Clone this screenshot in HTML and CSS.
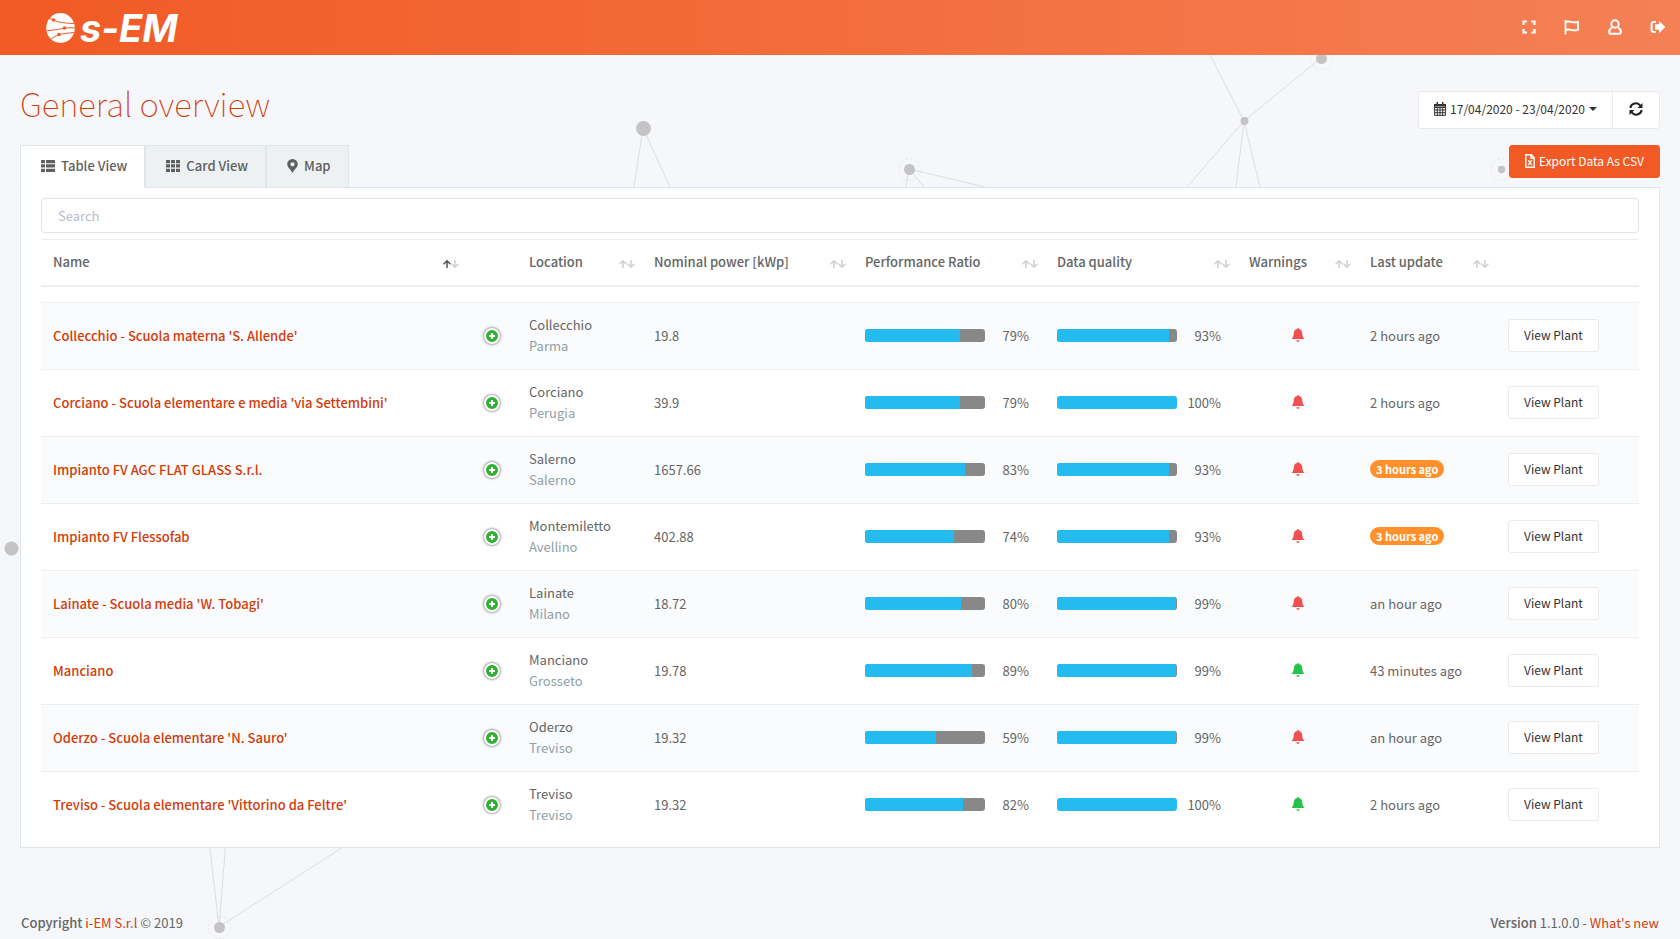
FILE: index.html
```html
<!DOCTYPE html>
<html lang="en">
<head>
    <meta charset="UTF-8">
    <meta name="viewport" content="width=device-width, initial-scale=1.0">
    <title>General overview</title>
    <link rel="stylesheet" href="styles.css">
</head>
<body>
    <!-- icons -->
    <svg class="sprite" aria-hidden="true">
        <symbol id="i-bell" viewBox="0 0 14 14"><path d="M7 0c.6 0 .9.4.9.9 2.200.4 3.200 2 3.300 4 .1 3 .9 4.500 2.400 6.100H.4C1.900 9.400 2.700 7.900 2.800 4.900c.1-2 1.100-3.600 3.300-4C6.100.4 6.400 0 7 0zM5.300 12.200h3.400c-.2.9-.8 1.600-1.700 1.600S5.500 13.100 5.300 12.200z"/></symbol>
        <symbol id="i-plus" viewBox="0 0 8 8"><path d="M3 1h2v2h2v2H5v2H3V5H1V3h2z"/></symbol>
        <symbol id="i-up" viewBox="0 0 8 10"><path d="M4 9V2M.5 5.200L4 1.700L7.500 5.200"/></symbol>
        <symbol id="i-down" viewBox="0 0 8 10"><path d="M4 1v7M.5 4.800L4 8.300L7.500 4.800"/></symbol>
    </svg>

    <svg class="network" viewBox="0 0 1680 939" preserveAspectRatio="xMidYMin slice" aria-hidden="true">
        <g class="lines">
            <path d="M643 128L634 187M643 128L670 187M909 169L906 187M909 169L924 187M909 169L985 187"/>
            <path d="M1321 58L1244 121L1210 55M1244 121L1187 187M1244 121L1236 187M1244 121L1260 187"/>
            <path d="M219 927L209 840M219 927L226 840M219 927L354 840"/>
        </g>
        <g class="nodes">
            <circle cx="643.5" cy="128.500" r="7.500"/>
            <circle cx="909.5" cy="169.500" r="5.500"/>
            <circle cx="1244.500" cy="121" r="4"/>
            <circle cx="1321.500" cy="58.500" r="5.500"/>
            <circle cx="1501.500" cy="169.500" r="3.700"/>
            <circle cx="11.500" cy="548.500" r="7"/>
            <circle cx="219.500" cy="927.500" r="5.500"/>
        </g>
        <g class="rings">
            <circle cx="909.5" cy="169.500" r="11"/>
            <circle cx="1321.500" cy="58.500" r="11"/>
            <circle cx="1501.500" cy="169.500" r="11"/>
            <circle cx="219.500" cy="927.500" r="11"/>
        </g>
    </svg>

    <header class="topbar">
        <a class="brand" href="#">
            <svg width="29" height="30" viewBox="0 0 29 30" aria-hidden="true">
                <ellipse cx="14.500" cy="15" rx="14.300" ry="15" fill="#fff"/>
                <g fill="none" stroke="#f15a24" stroke-width="1">
                    <path d="M2 5q4 1 8 3t18 2.500M0 18q9-1 17-2.500t12-.5M5 26q5-4 11-5t12-1.500"/>
                </g>
                <g fill="#f15a24"><circle cx="7.500" cy="7" r="1.800"/><circle cx="18.500" cy="15" r="1.800"/><circle cx="13" cy="21.500" r="1.800"/></g>
            </svg>
            <span class="brand-name">s-EM</span>
        </a>
        <nav class="topnav">
            <a href="#" aria-label="Full screen"><svg width="14" height="14" viewBox="0 0 14 14"><path d="M1.500 5V1.500H5M9 1.500h3.500V5M12.500 9v3.500H9M5 12.500H1.500V9" fill="none" stroke="#fff" stroke-width="2.200"/></svg></a>
            <a href="#" aria-label="Notifications"><svg width="16" height="16" viewBox="0 0 16 16"><path d="M1.500 1v14.500M1.500 3.200c4-2.400 6 1.600 12.500-.4v8c-6.500 2-8.500-2-12.500.4" fill="none" stroke="#fff" stroke-width="1.800"/></svg></a>
            <a href="#" aria-label="User"><svg width="14" height="16" viewBox="0 0 14 16"><path d="M7 1.300a3.700 3.700 0 1 1 0 7.400a3.700 3.700 0 0 1 0-7.400zM4 9Q1.200 9.600 1.200 13q0 1.700 1.200 1.700h9.200q1.200 0 1.200-1.700Q12.800 9.600 10 9" fill="none" stroke="#fff" stroke-width="2"/></svg></a>
            <a href="#" aria-label="Log out"><svg width="16" height="14" viewBox="0 0 16 14"><path d="M6 2H3.500Q1.600 2 1.600 4v6q0 2 1.900 2H6" fill="none" stroke="#fff" stroke-width="2"/><path d="M9 1l6.500 6L9 13V9.800H5V4.200h4z" fill="#fff"/></svg></a>
        </nav>
    </header>

    <main class="content">
        <div class="heading">
            <h1>General overview</h1>
            <div class="btn-group">
                <button class="btn" type="button">
                    <svg width="12" height="14" viewBox="0 0 12 14" aria-hidden="true"><path d="M.6 2.600h10.800v10.800H.6zM.6 5.500h10.800M.6 8h10.800M.6 10.700h10.800M3.300 5v8M6 5v8M8.700 5v8" fill="none" stroke="#333" stroke-width="1"/><path d="M0 2h12v2.500H0zM2.500 0h1.500v3H2.500zM8 0h1.500v3H8z" fill="#333"/></svg>
                    <span>17/04/2020 - 23/04/2020</span>
                    <span class="caret"></span>
                </button>
                <button class="btn" type="button" aria-label="Refresh">
                    <svg width="14" height="14" viewBox="0 0 14 14" aria-hidden="true"><path d="M1.300 6A5.600 5.600 0 0 1 11.300 3.600M12.700 8A5.600 5.600 0 0 1 2.700 10.400" fill="none" stroke="#222" stroke-width="2"/><path d="M13.500 1v5H8.500zM.5 13V8h5z" fill="#222"/></svg>
                </button>
            </div>
        </div>

        <div class="tabs-row">
            <nav class="tabs">
                <a class="tab active" href="#">
                    <svg width="14" height="12" viewBox="0 0 14 12"><path d="M0 0h4v3.300H0zM5 0h9v3.300H5zM0 4.300h4v3.300H0zM5 4.300h9v3.300H5zM0 8.700h4V12H0zM5 8.700h9V12H5z"/></svg>
                    Table View
                </a>
                <a class="tab" href="#">
                    <svg width="14" height="12" viewBox="0 0 14 12"><path d="M0 0h4v3.300H0zM5 0h4v3.300H5zM10 0h4v3.300h-4zM0 4.300h4v3.300H0zM5 4.300h4v3.300H5zM10 4.300h4v3.300h-4zM0 8.700h4V12H0zM5 8.700h4V12H5zM10 8.700h4V12h-4z"/></svg>
                    Card View
                </a>
                <a class="tab" href="#">
                    <svg width="11" height="14" viewBox="0 0 11 14"><path fill-rule="evenodd" d="M5.500 0A5.300 5.300 0 0 1 10.800 5.300C10.800 8 7 11 5.500 14C4 11 .2 8 .2 5.300A5.300 5.300 0 0 1 5.500 0zM5.500 3.200a2.100 2.100 0 1 0 0 4.200a2.100 2.100 0 0 0 0-4.200z"/></svg>
                    Map
                </a>
            </nav>
            <button class="btn btn-export" type="button">
                <svg width="10" height="14" viewBox="0 0 10 14" aria-hidden="true"><path d="M.8.8h5.400l3 3v9.400H.8zM6 1v3.200h3" fill="none" stroke="#fff" stroke-width="1.400"/><path d="M3.200 6.200l3.600 5M6.800 6.200l-3.600 5" stroke="#fff" stroke-width="1.300"/></svg>
                <span>Export Data As CSV</span>
            </button>
        </div>

        <section class="panel">
            <input class="search" type="text" placeholder="Search" aria-label="Search">
            <table class="plants">
                <colgroup>
                    <col><col class="c-expand"><col class="c-location"><col class="c-power"><col class="c-bar"><col class="c-bar"><col class="c-warn"><col class="c-update"><col class="c-action">
                </colgroup>
                <thead>
                    <tr>
                        <th><div class="th">Name <span class="sort asc"><svg><use href="#i-up"/></svg><svg><use href="#i-down"/></svg></span></div></th>
                        <th></th>
                        <th><div class="th">Location <span class="sort"><svg><use href="#i-up"/></svg><svg><use href="#i-down"/></svg></span></div></th>
                        <th><div class="th">Nominal power [kWp] <span class="sort"><svg><use href="#i-up"/></svg><svg><use href="#i-down"/></svg></span></div></th>
                        <th><div class="th">Performance Ratio <span class="sort"><svg><use href="#i-up"/></svg><svg><use href="#i-down"/></svg></span></div></th>
                        <th><div class="th">Data quality <span class="sort"><svg><use href="#i-up"/></svg><svg><use href="#i-down"/></svg></span></div></th>
                        <th><div class="th">Warnings <span class="sort"><svg><use href="#i-up"/></svg><svg><use href="#i-down"/></svg></span></div></th>
                        <th><div class="th">Last update <span class="sort"><svg><use href="#i-up"/></svg><svg><use href="#i-down"/></svg></span></div></th>
                        <th></th>
                    </tr>
                </thead>
                <tbody>
                    <tr>
                        <td><a class="plant" href="#">Collecchio - Scuola materna 'S. Allende'</a></td>
                        <td><button class="expand" type="button" aria-label="Expand"><svg><use href="#i-plus"/></svg></button></td>
                        <td>Collecchio<div class="muted">Parma</div></td>
                        <td>19.8</td>
                        <td><div class="meter"><div class="bar"><div class="fill" style="width: 79%"></div></div><span>79%</span></div></td>
                        <td><div class="meter"><div class="bar"><div class="fill" style="width: 93%"></div></div><span>93%</span></div></td>
                        <td><svg class="bell"><use href="#i-bell"/></svg></td>
                        <td>2 hours ago</td>
                        <td><button class="btn" type="button">View Plant</button></td>
                    </tr>
                    <tr>
                        <td><a class="plant" href="#">Corciano - Scuola elementare e media 'via Settembini'</a></td>
                        <td><button class="expand" type="button" aria-label="Expand"><svg><use href="#i-plus"/></svg></button></td>
                        <td>Corciano<div class="muted">Perugia</div></td>
                        <td>39.9</td>
                        <td><div class="meter"><div class="bar"><div class="fill" style="width: 79%"></div></div><span>79%</span></div></td>
                        <td><div class="meter"><div class="bar"><div class="fill" style="width: 100%"></div></div><span>100%</span></div></td>
                        <td><svg class="bell"><use href="#i-bell"/></svg></td>
                        <td>2 hours ago</td>
                        <td><button class="btn" type="button">View Plant</button></td>
                    </tr>
                    <tr>
                        <td><a class="plant" href="#">Impianto FV AGC FLAT GLASS S.r.l.</a></td>
                        <td><button class="expand" type="button" aria-label="Expand"><svg><use href="#i-plus"/></svg></button></td>
                        <td>Salerno<div class="muted">Salerno</div></td>
                        <td>1657.66</td>
                        <td><div class="meter"><div class="bar"><div class="fill" style="width: 83%"></div></div><span>83%</span></div></td>
                        <td><div class="meter"><div class="bar"><div class="fill" style="width: 93%"></div></div><span>93%</span></div></td>
                        <td><svg class="bell"><use href="#i-bell"/></svg></td>
                        <td><span class="badge">3 hours ago</span></td>
                        <td><button class="btn" type="button">View Plant</button></td>
                    </tr>
                    <tr>
                        <td><a class="plant" href="#">Impianto FV Flessofab</a></td>
                        <td><button class="expand" type="button" aria-label="Expand"><svg><use href="#i-plus"/></svg></button></td>
                        <td>Montemiletto<div class="muted">Avellino</div></td>
                        <td>402.88</td>
                        <td><div class="meter"><div class="bar"><div class="fill" style="width: 74%"></div></div><span>74%</span></div></td>
                        <td><div class="meter"><div class="bar"><div class="fill" style="width: 93%"></div></div><span>93%</span></div></td>
                        <td><svg class="bell"><use href="#i-bell"/></svg></td>
                        <td><span class="badge">3 hours ago</span></td>
                        <td><button class="btn" type="button">View Plant</button></td>
                    </tr>
                    <tr>
                        <td><a class="plant" href="#">Lainate - Scuola media 'W. Tobagi'</a></td>
                        <td><button class="expand" type="button" aria-label="Expand"><svg><use href="#i-plus"/></svg></button></td>
                        <td>Lainate<div class="muted">Milano</div></td>
                        <td>18.72</td>
                        <td><div class="meter"><div class="bar"><div class="fill" style="width: 80%"></div></div><span>80%</span></div></td>
                        <td><div class="meter"><div class="bar"><div class="fill" style="width: 99%"></div></div><span>99%</span></div></td>
                        <td><svg class="bell"><use href="#i-bell"/></svg></td>
                        <td>an hour ago</td>
                        <td><button class="btn" type="button">View Plant</button></td>
                    </tr>
                    <tr>
                        <td><a class="plant" href="#">Manciano</a></td>
                        <td><button class="expand" type="button" aria-label="Expand"><svg><use href="#i-plus"/></svg></button></td>
                        <td>Manciano<div class="muted">Grosseto</div></td>
                        <td>19.78</td>
                        <td><div class="meter"><div class="bar"><div class="fill" style="width: 89%"></div></div><span>89%</span></div></td>
                        <td><div class="meter"><div class="bar"><div class="fill" style="width: 99%"></div></div><span>99%</span></div></td>
                        <td><svg class="bell ok"><use href="#i-bell"/></svg></td>
                        <td>43 minutes ago</td>
                        <td><button class="btn" type="button">View Plant</button></td>
                    </tr>
                    <tr>
                        <td><a class="plant" href="#">Oderzo - Scuola elementare 'N. Sauro'</a></td>
                        <td><button class="expand" type="button" aria-label="Expand"><svg><use href="#i-plus"/></svg></button></td>
                        <td>Oderzo<div class="muted">Treviso</div></td>
                        <td>19.32</td>
                        <td><div class="meter"><div class="bar"><div class="fill" style="width: 59%"></div></div><span>59%</span></div></td>
                        <td><div class="meter"><div class="bar"><div class="fill" style="width: 99%"></div></div><span>99%</span></div></td>
                        <td><svg class="bell"><use href="#i-bell"/></svg></td>
                        <td>an hour ago</td>
                        <td><button class="btn" type="button">View Plant</button></td>
                    </tr>
                    <tr>
                        <td><a class="plant" href="#">Treviso - Scuola elementare 'Vittorino da Feltre'</a></td>
                        <td><button class="expand" type="button" aria-label="Expand"><svg><use href="#i-plus"/></svg></button></td>
                        <td>Treviso<div class="muted">Treviso</div></td>
                        <td>19.32</td>
                        <td><div class="meter"><div class="bar"><div class="fill" style="width: 82%"></div></div><span>82%</span></div></td>
                        <td><div class="meter"><div class="bar"><div class="fill" style="width: 100%"></div></div><span>100%</span></div></td>
                        <td><svg class="bell ok"><use href="#i-bell"/></svg></td>
                        <td>2 hours ago</td>
                        <td><button class="btn" type="button">View Plant</button></td>
                    </tr>
                </tbody>
            </table>
        </section>
    </main>

    <footer class="footer">
        <div><strong>Copyright</strong> <a href="#">i-EM S.r.l</a> © 2019</div>
        <div><strong>Version</strong> 1.1.0.0 - <a href="#">What's new</a></div>
    </footer>
</body>
</html>
```
FILE: styles.css
```css
* {
    box-sizing: border-box;
}

body {
    margin: 0;
    min-height: 100vh;
    display: flex;
    flex-direction: column;
    position: relative;
    overflow-x: hidden;
    background-color: #f5f7fa;
    color: #656565;
    font-family: "Noto Sans CJK SC", "Noto Sans", sans-serif;
    font-size: 13px;
    line-height: 21px;
}

a {
    color: #d23c0a;
    text-decoration: none;
}

strong {
    font-weight: 500;
}

button, input {
    font-family: inherit;
}

.sprite {
    display: none;
}

/* background network */
.network {
    position: absolute;
    top: 0;
    left: 0;
    width: 100%;
    height: 100%;
    z-index: -1;
}

.lines {
    fill: none;
    stroke: #dedede;
    stroke-width: 1;
}

.nodes {
    fill: #c4c4c4;
}

.rings {
    fill: none;
    stroke: #e4e5e8;
    stroke-dasharray: 2 2;
}

/* top bar */
.topbar {
    display: flex;
    justify-content: space-between;
    align-items: center;
    height: 55px;
    padding: 0 14px 0 46px;
    background: linear-gradient(to right, #f15a24, #f58055);
}

.brand {
    display: flex;
    align-items: center;
    gap: 5px;
    color: #fff;
}

.brand-name {
    font-family: Inter, sans-serif;
    font-size: 38px;
    font-weight: 700;
    font-style: italic;
    line-height: 36px;
}

.topnav {
    display: flex;
    align-items: center;
    gap: 28px;
    padding-bottom: 2px;
}

.topnav a {
    display: flex;
}

/* page */
.content {
    padding: 36px 20px 0;
}

.heading {
    display: flex;
    justify-content: space-between;
    align-items: flex-start;
    margin-bottom: 16px;
}

h1 {
    margin: 0;
    color: #d23c0a;
    font-size: 33px;
    font-weight: 100;
    line-height: 24px;
}

.btn {
    display: inline-flex;
    align-items: center;
    gap: 4px;
    height: 33px;
    padding: 0 15px;
    border: 1px solid #eaeaea;
    border-radius: 3px;
    background-color: #fff;
    color: #333;
    font-size: 12px;
    line-height: 18px;
    white-space: nowrap;
    cursor: pointer;
}

.btn-group {
    display: flex;
}

.btn-group .btn {
    height: 38px;
    padding-bottom: 2px;
}

.btn-group .btn:first-child {
    border-radius: 3px 0 0 3px;
}

.btn-group .btn:last-child {
    margin-left: -1px;
    padding-left: 16px;
    padding-right: 16px;
    border-radius: 0 3px 3px 0;
}

.caret {
    border: 4px solid transparent;
    border-top-color: #333;
    border-bottom: 0;
}

.btn-export {
    padding-bottom: 2px;
    border-color: #f15a24;
    background-color: #f15a24;
    color: #fff;
}

/* tabs */
.tabs-row {
    display: flex;
    justify-content: space-between;
    align-items: flex-start;
}

.tabs {
    display: flex;
    position: relative;
    margin-bottom: -1px;
}

.tab {
    display: flex;
    align-items: center;
    gap: 6px;
    height: 43px;
    padding: 0 17px 2px 20px;
    border: 1px solid #dde6e9;
    background-color: #edf1f2;
    color: #5f5f5f;
    font-weight: 500;
}

.tab svg {
    fill: #5f5f5f;
}

.tab.active {
    border-bottom-color: #fff;
    background-color: #fff;
}

.panel {
    padding: 10px 20px 9px;
    border: 1px solid #dde6e9;
    background-color: #fff;
}

.search {
    display: block;
    width: 100%;
    height: 35px;
    margin-bottom: 6px;
    padding: 6px 16px;
    border: 1px solid #dde6e9;
    border-radius: 4px;
    color: #3a3f51;
    font-size: 13px;
}

.search::placeholder {
    color: #b7bac9;
}

/* table */
.plants {
    width: 100%;
    table-layout: fixed;
    border-collapse: separate;
    border-spacing: 0;
}

.c-expand { width: 51px; }
.c-location { width: 125px; }
.c-power { width: 211px; }
.c-bar { width: 192px; }
.c-warn { width: 121px; }
.c-update { width: 138px; }
.c-action { width: 143px; }

.plants th {
    padding: 11px 7px 13px 12px;
    border-top: 1px solid #eee;
    border-bottom: 2px solid #eee;
    font-weight: 500;
    text-align: left;
}

.plants td {
    padding: 11px 4px 13px 12px;
    border-top: 1px solid #eee;
    vertical-align: middle;
}

.plants tbody::before {
    content: "";
    display: table-row;
    height: 15px;
}

.plants tbody tr:nth-child(odd) {
    background-color: #fafbfc;
}

.th {
    display: flex;
    justify-content: space-between;
    align-items: center;
    height: 21px;
    white-space: nowrap;
}

.sort {
    display: flex;
    padding-top: 5px;
}

.sort svg {
    width: 8px;
    height: 10px;
    fill: none;
    stroke: #d0d0d0;
    stroke-width: 1.5;
}

.sort.asc svg:first-child {
    stroke: #555;
}

.plant {
    font-weight: 500;
}

.muted {
    color: #909fa7;
}

.expand {
    display: flex;
    align-items: center;
    justify-content: center;
    width: 16px;
    height: 16px;
    margin: 2px 0 0 6px;
    padding: 0;
    border: 2px solid #fff;
    border-radius: 50%;
    background-color: #31b131;
    box-shadow: 0 0 3px #444;
    cursor: pointer;
}

.expand svg {
    width: 8px;
    height: 8px;
    flex-shrink: 0;
    fill: #fff;
}

.meter {
    display: flex;
    align-items: center;
}

.bar {
    width: 120px;
    height: 13px;
    border-radius: 3px;
    overflow: hidden;
    background-color: #888;
}

.fill {
    height: 100%;
    background-color: #24bbf0;
}

.meter span {
    width: 44px;
    text-align: right;
}

.bell {
    display: block;
    width: 14px;
    height: 14px;
    margin-left: 42px;
    fill: #f05050;
}

.bell.ok {
    fill: #27c24c;
}

.badge {
    display: block;
    width: fit-content;
    padding: 0 6px;
    border-radius: 9px;
    background-color: #ff902b;
    color: #fff;
    font-size: 11px;
    font-weight: 700;
    line-height: 18px;
}

.footer {
    display: flex;
    justify-content: space-between;
    margin-top: auto;
    padding: 0 21px 6px;
}
```
